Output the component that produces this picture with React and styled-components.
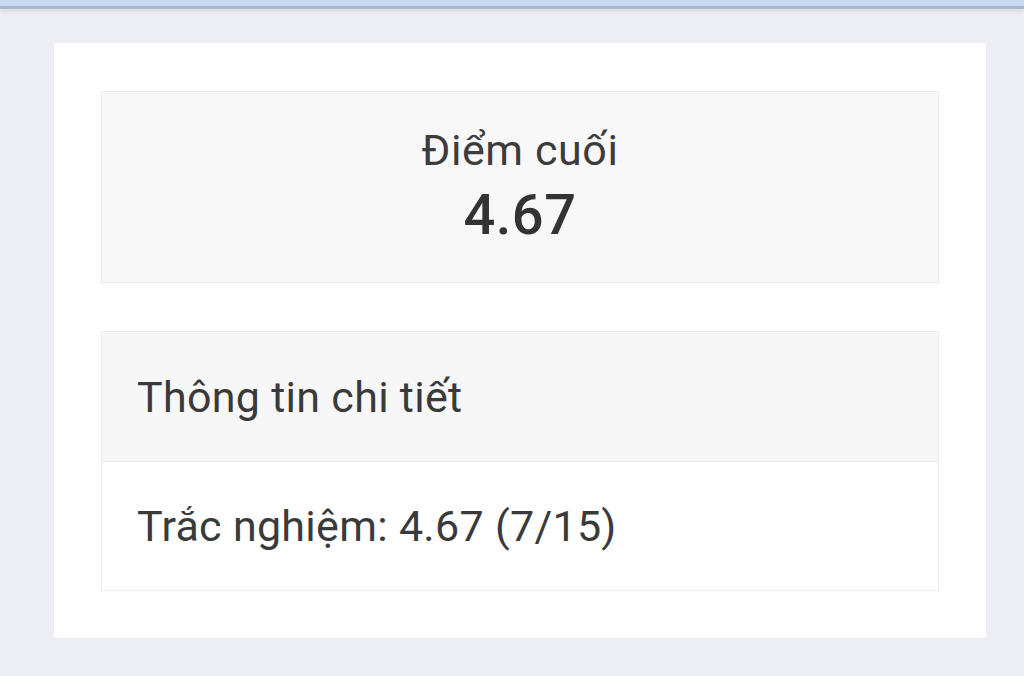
import React from "react";
import styled, { createGlobalStyle } from "styled-components";

const GlobalStyle = createGlobalStyle`
  html, body {
    margin: 0;
    padding: 0;
    background: #eceef3;
    font-family: Roboto, "Noto Sans", "Liberation Sans", sans-serif;
    color: #3a3a3a;
  }
`;

const TopBar = styled.div`
  height: 6px;
  background: #c9d9f1;
  border-bottom: 3px solid #adb7c8;
  box-shadow: 0 2px 4px rgba(150, 160, 180, 0.25);
`;

const Main = styled.main`
  padding: 34px 38px 0 54px;
`;

const Card = styled.section`
  background: #fff;
  border-radius: 2px;
  padding: 48px 47px 47px;
  display: flex;
  flex-direction: column;
  gap: 48px;
`;

const ScoreBox = styled.div`
  height: 190px;
  background: #f8f8f8;
  border: 1px solid #ececec;
  display: flex;
  flex-direction: column;
  align-items: center;
  justify-content: center;
`;

const ScoreLabel = styled.div`
  font-size: 43px;
  line-height: 52px;
  letter-spacing: 0.6px;
  color: #3c3c3c;
  margin-top: -2px;
`;

const ScoreValue = styled.div`
  font-size: 56px;
  line-height: 66px;
  font-weight: 500;
  letter-spacing: 0.5px;
  color: #333;
  margin-top: 6px;
`;

const Panel = styled.div`
  border: 1px solid #ececec;
  display: flex;
  flex-direction: column;
`;

const PanelRow = styled.div`
  height: ${(p) => p.$height}px;
  padding: 0 35px;
  display: flex;
  align-items: center;
  font-size: 43px;
  letter-spacing: 0.3px;
  color: #3a3a3a;
  background: ${(p) => (p.$head ? "#f7f7f7" : "#fff")};
  border-bottom: ${(p) => (p.$head ? "1px solid #ececec" : "none")};
`;

export default function App() {
  return (
    <>
      <GlobalStyle />
      <TopBar />
      <Main>
        <Card>
          <ScoreBox>
            <ScoreLabel>Điểm cuối</ScoreLabel>
            <ScoreValue>4.67</ScoreValue>
          </ScoreBox>
          <Panel>
            <PanelRow $head $height={129}>Thông tin chi tiết</PanelRow>
            <PanelRow $height={128}>Trắc nghiệm: 4.67 (7/15)</PanelRow>
          </Panel>
        </Card>
      </Main>
    </>
  );
}
